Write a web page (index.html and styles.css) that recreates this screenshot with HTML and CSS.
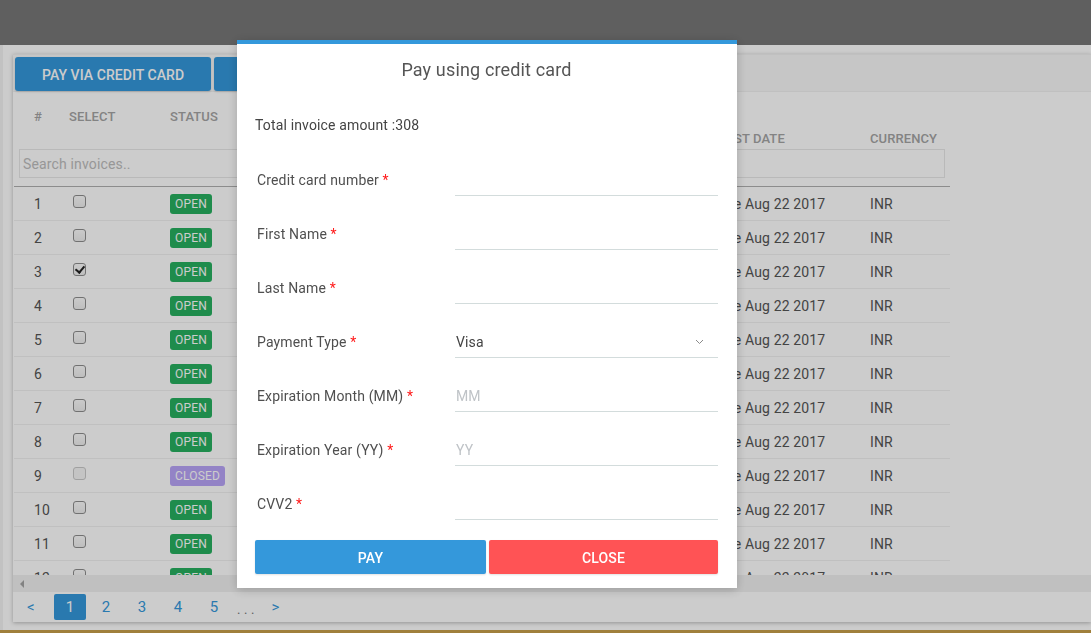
FILE: index.html
```html
<!DOCTYPE html>
<html lang="en">
<head>
<meta charset="utf-8">
<title>Invoices</title>
<link rel="stylesheet" href="styles.css">
</head>
<body>
<div class="app">
  <header class="topbar"></header>
  <div class="main">
    <div class="edge"></div>
    <section class="card">
      <div class="toolbar">
        <button class="tb-btn">PAY VIA CREDIT CARD</button>
        <button class="tb-btn">DOWNLOAD INVOICES</button>
      </div>
      <div class="table">
        <div class="thead">
          <div class="hrow">
            <div class="th th-top pl">#</div>
            <div class="th th-top">SELECT</div>
            <div class="th th-top">STATUS</div>
            <div class="th th-bottom">LAST DATE</div>
            <div class="th th-bottom">CURRENCY</div>
          </div>
          <div class="search-row">
            <input class="search" type="text" placeholder="Search invoices..">
          </div>
        </div>
        <div class="tbody">
          <div class="row"><div class="pl">1</div><div><input class="cb" type="checkbox"></div><div><span class="badge open">OPEN</span></div><div>Tue Aug 22 2017</div><div>INR</div></div>
          <div class="row"><div class="pl">2</div><div><input class="cb" type="checkbox"></div><div><span class="badge open">OPEN</span></div><div>Tue Aug 22 2017</div><div>INR</div></div>
          <div class="row"><div class="pl">3</div><div><input class="cb" type="checkbox" checked></div><div><span class="badge open">OPEN</span></div><div>Tue Aug 22 2017</div><div>INR</div></div>
          <div class="row"><div class="pl">4</div><div><input class="cb" type="checkbox"></div><div><span class="badge open">OPEN</span></div><div>Tue Aug 22 2017</div><div>INR</div></div>
          <div class="row"><div class="pl">5</div><div><input class="cb" type="checkbox"></div><div><span class="badge open">OPEN</span></div><div>Tue Aug 22 2017</div><div>INR</div></div>
          <div class="row"><div class="pl">6</div><div><input class="cb" type="checkbox"></div><div><span class="badge open">OPEN</span></div><div>Tue Aug 22 2017</div><div>INR</div></div>
          <div class="row"><div class="pl">7</div><div><input class="cb" type="checkbox"></div><div><span class="badge open">OPEN</span></div><div>Tue Aug 22 2017</div><div>INR</div></div>
          <div class="row"><div class="pl">8</div><div><input class="cb" type="checkbox"></div><div><span class="badge open">OPEN</span></div><div>Tue Aug 22 2017</div><div>INR</div></div>
          <div class="row"><div class="pl">9</div><div><input class="cb" type="checkbox" disabled></div><div><span class="badge closed">CLOSED</span></div><div>Tue Aug 22 2017</div><div>INR</div></div>
          <div class="row"><div class="pl">10</div><div><input class="cb" type="checkbox"></div><div><span class="badge open">OPEN</span></div><div>Tue Aug 22 2017</div><div>INR</div></div>
          <div class="row"><div class="pl">11</div><div><input class="cb" type="checkbox"></div><div><span class="badge open">OPEN</span></div><div>Tue Aug 22 2017</div><div>INR</div></div>
          <div class="row"><div class="pl">12</div><div><input class="cb" type="checkbox"></div><div><span class="badge open">OPEN</span></div><div>Tue Aug 22 2017</div><div>INR</div></div>
        </div>
      </div>
      <div class="hscroll"><span class="arrow-left"></span></div>
      <nav class="pager">
        <a class="pg prev">&lt;</a>
        <a class="pg active">1</a>
        <a class="pg">2</a>
        <a class="pg">3</a>
        <a class="pg">4</a>
        <a class="pg">5</a>
        <span class="dots">. . .</span>
        <a class="pg">&gt;</a>
      </nav>
    </section>
  </div>
  <footer class="footer"></footer>
</div>

<div class="backdrop"></div>

<div class="modal">
  <h2 class="modal-title">Pay using credit card</h2>
  <p class="total">Total invoice amount :308</p>
  <form class="form">
    <label class="lbl">Credit card number <span class="req">*</span></label>
    <input class="fld" type="text">
    <label class="lbl">First Name <span class="req">*</span></label>
    <input class="fld" type="text">
    <label class="lbl">Last Name <span class="req">*</span></label>
    <input class="fld" type="text">
    <label class="lbl">Payment Type <span class="req">*</span></label>
    <div class="select-wrap">
      <select class="fld sel"><option>Visa</option><option>MasterCard</option></select>
      <svg class="chev" width="9" height="6" viewBox="0 0 9 6"><path d="M1 1l3.5 3.5L8 1" fill="none" stroke="#8a8a8a" stroke-width="1"/></svg>
    </div>
    <label class="lbl">Expiration Month (MM) <span class="req">*</span></label>
    <input class="fld" type="text" placeholder="MM">
    <label class="lbl">Expiration Year (YY) <span class="req">*</span></label>
    <input class="fld" type="text" placeholder="YY">
    <label class="lbl">CVV2 <span class="req">*</span></label>
    <input class="fld" type="text">
  </form>
  <div class="actions">
    <button class="act pay">PAY</button>
    <button class="act close">CLOSE</button>
  </div>
</div>
</body>
</html>
```

FILE: styles.css
```css
* { box-sizing: border-box; }

html, body {
  margin: 0;
  padding: 0;
  width: 1091px;
  height: 633px;
  overflow: hidden;
  font-family: Roboto, "Liberation Sans", Arial, sans-serif;
  letter-spacing: 0.15px;
  background: #ffffff;
  color: #555;
}

.app {
  display: flex;
  flex-direction: column;
  height: 633px;
}

.topbar {
  height: 45px;
  background: #777777;
  flex: none;
}

.main {
  height: 585px;
  display: flex;
  flex: none;
  background: #ffffff;
}

.edge {
  width: 3px;
  background: #f3f3f3;
  flex: none;
}

.card {
  margin: 9px 0 0 10px;
  flex: 1;
  height: 568px;
  background: #ffffff;
  box-shadow: 0 1px 4px rgba(0, 0, 0, 0.28);
  display: flex;
  flex-direction: column;
}

.footer {
  height: 3px;
  background: #c9a14c;
  flex: none;
}

/* toolbar */
.toolbar {
  height: 38px;
  flex: none;
  background: #f8f8f8;
  border-top: 1px solid #f0f0f0;
  border-bottom: 1px solid #f0f0f0;
  padding: 2px 2px 0 2px;
  display: flex;
  gap: 3px;
}

.tb-btn {
  height: 34px;
  border: 0;
  border-radius: 3px;
  background: #3498db;
  color: #ffffff;
  font-family: Roboto, "Liberation Sans", Arial, sans-serif;
  font-size: 14px;
  font-weight: 500;
  letter-spacing: 0.05px;
  padding: 2px 27px 0;
  box-shadow: 0 1px 2px rgba(0,0,0,0.15);
}

/* table */
.table {
  width: 936px;
  margin-left: 1px;
  flex: none;
}

.hrow, .row {
  display: grid;
  grid-template-columns: 55px 101px 548px 152px 80px;
}

.hrow {
  height: 57px;
}

.th {
  font-size: 13px;
  line-height: 20px;
  font-weight: 500;
  letter-spacing: 0.1px;
  color: #a4a4a4;
}

.th-top { align-self: start; padding-top: 15px; }
.th-bottom { align-self: end; }

.pl { padding-left: 20px; }

.search-row {
  height: 38px;
  padding: 0 0 8px 5px;
  border-bottom: 1px solid #b0b0b0;
}

.search {
  width: 926px;
  height: 29px;
  border: 1px solid #e8e8e8;
  padding: 0 4px 0 3px;
  font-family: Roboto, "Liberation Sans", Arial, sans-serif;
  font-size: 14px;
  letter-spacing: 0.15px;
  color: #555;
  background: #fff;
  outline: none;
}

.search::placeholder { color: #bdbdbd; }

.tbody {
  height: 388px;
  overflow: hidden;
}

.row {
  height: 34px;
  border-bottom: 1px solid #f0f0f0;
  align-items: center;
  font-size: 14px;
  color: #555;
}

.row > div {
  display: flex;
  align-items: center;
}

.cb {
  appearance: none;
  -webkit-appearance: none;
  position: relative;
  width: 13px;
  height: 13px;
  margin: 0 0 4px 4px;
  border: 1px solid #8e8e8e;
  border-radius: 3px;
  background: linear-gradient(#fdfdfd, #eeeeee);
}

.cb:checked::after {
  content: "";
  position: absolute;
  left: 3px;
  top: 0px;
  width: 4px;
  height: 7px;
  border-right: 2px solid #222;
  border-bottom: 2px solid #222;
  transform: rotate(40deg);
}

.cb:disabled {
  border-color: #c8c8c8;
  background: #f6f6f6;
}

.badge {
  display: inline-block;
  height: 20px;
  line-height: 20px;
  padding: 0 5px;
  border-radius: 3px;
  font-size: 12px;
  letter-spacing: 0.2px;
  color: #ffffff;
}

.badge.open { background: #27b060; }
.badge.closed { background: #b8a4f8; }

/* horizontal scrollbar */
.hscroll {
  height: 17px;
  flex: none;
  background: #f1f1f1;
  display: flex;
  align-items: center;
  padding-left: 7px;
}

.arrow-left {
  width: 0;
  height: 0;
  border-top: 4px solid transparent;
  border-bottom: 4px solid transparent;
  border-right: 4px solid #a3a3a3;
}

/* pager */
.pager {
  height: 30px;
  flex: none;
  display: flex;
  align-items: center;
  gap: 4px;
  padding-left: 2px;
}

.pg {
  width: 32px;
  height: 26px;
  line-height: 26px;
  text-align: center;
  font-size: 15px;
  color: #3498db;
  border-radius: 2px;
}

.pg.prev { margin-right: 3px; }

.pg.active {
  background: #3498db;
  color: #ffffff;
}

.dots {
  font-size: 13px;
  color: #777;
  padding: 4px 1px 0 3px;
}

/* backdrop + modal */
.backdrop {
  position: fixed;
  inset: 0;
  background: rgba(0, 0, 0, 0.2);
}

.modal {
  position: fixed;
  top: 40px;
  left: 237px;
  width: 500px;
  background: #ffffff;
  border-top: 4px solid #3498db;
  padding: 13px 19px 14px 18px;
  box-shadow: 0 2px 10px rgba(0, 0, 0, 0.2);
}

.modal-title {
  margin: 0 0 32px;
  font-size: 18px;
  line-height: 26px;
  font-weight: 400;
  text-align: center;
  color: #555;
}

.total {
  margin: 0 0 27px;
  font-size: 14px;
  line-height: 20px;
  color: #444;
}

.form {
  display: grid;
  grid-template-columns: 200px 263px;
  row-gap: 20px;
  margin: 0;
}

.lbl {
  align-self: center;
  padding: 2px 0 0 2px;
  font-size: 14px;
  line-height: 20px;
  color: #4f4f4f;
}

.req { color: #ff1a1a; }

.fld {
  display: block;
  width: 263px;
  height: 34px;
  border: 0;
  border-bottom: 1px solid #d3dcdc;
  padding: 2px 0 0 1px;
  font-family: Roboto, "Liberation Sans", Arial, sans-serif;
  font-size: 14px;
  letter-spacing: 0.15px;
  color: #444;
  background: transparent;
  outline: none;
  border-radius: 0;
}

.fld::placeholder { color: #bfc3c7; }

.select-wrap { position: relative; }

.sel {
  appearance: none;
  -webkit-appearance: none;
}

.chev {
  position: absolute;
  right: 14px;
  top: 15px;
  pointer-events: none;
}

.actions {
  display: grid;
  grid-template-columns: 231px 229px;
  gap: 3px;
  margin-top: 20px;
}

.act {
  height: 34px;
  border: 0;
  border-radius: 2px;
  padding-top: 2px;
  color: #ffffff;
  font-family: Roboto, "Liberation Sans", Arial, sans-serif;
  font-size: 14px;
  font-weight: 500;
  letter-spacing: 0.15px;
  box-shadow: 0 1px 2px rgba(0,0,0,0.12);
}

.act.pay { background: #3498db; }
.act.close { background: #ff5355; }
```
